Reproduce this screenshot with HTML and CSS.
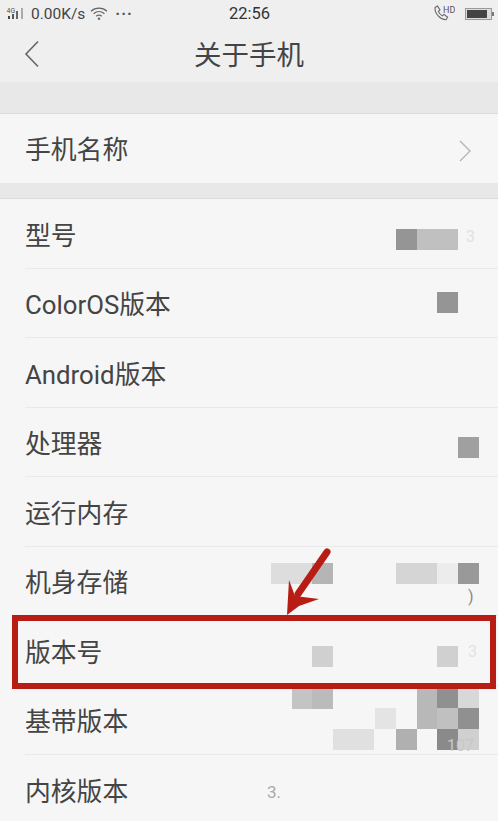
FILE: index.html
```html
<!DOCTYPE html>
<html lang="zh">
<head>
<meta charset="utf-8">
<title>关于手机</title>
<link rel="stylesheet" href="styles.css">
</head>
<body>
<div class="page">
  <header class="top">
    <div class="status">
      <div class="status-left">
        <svg class="sig" width="22" height="15" viewBox="0 0 22 15"><text x="0.500" y="7" class="sig-t">4G</text><rect x="2" y="10" width="2" height="3" fill="#444"/><rect x="6" y="8" width="2" height="5" fill="#555"/><rect x="10" y="5" width="2" height="8" fill="#666"/><rect x="15" y="2" width="2" height="11" fill="#aaa"/></svg>
        <span class="speed">0.00K/s</span>
        <svg class="wifi" width="18" height="15" viewBox="0 0 18 15" fill="none" stroke="#666" stroke-width="1.2"><path d="M1 5.200C5.500 1 12.500 1 17 5.200"/><path d="M3.600 7.800C6.800 5 11.200 5 14.400 7.800"/><path d="M6.200 10.200C8 8.800 10 8.800 11.800 10.200"/><circle cx="9" cy="12.800" r="1.200" fill="#666" stroke="none"/></svg>
        <span class="dots">···</span>
      </div>
      <span class="time">22:56</span>
      <div class="status-right">
        <svg width="22" height="18" viewBox="0 0 22 18" fill="none" stroke="#666" stroke-width="1.100"><path d="M2 2.500 4.500 1l2.500 4-1.600 1.400c.8 2 2 3.400 4 4.400L11 9.400l3.600 2.800-1.600 2.600C8 15 1.500 9 2 2.500z"/><text x="10" y="8" class="hd">HD</text></svg>
        <span class="battery"><span class="level"></span></span>
      </div>
    </div>
    <nav class="nav">
      <svg class="back" width="16" height="28" viewBox="0 0 16 28" fill="none" stroke="#666" stroke-width="1.600"><path d="M14 1.500 2 14 14 26.500"/></svg>
      <h1 class="title">关于手机</h1>
    </nav>
  </header>
  <div class="band band-a"></div>
  <section class="group">
    <div class="row row-name"><span>手机名称</span><svg class="chev" width="14" height="22" viewBox="0 0 14 22" fill="none" stroke="#b4b4b4" stroke-width="1.400"><path d="M2 1 12 11 2 21"/></svg></div>
  </section>
  <div class="band band-b"></div>
  <section class="group">
    <div class="row">型号</div>
    <div class="row">ColorOS版本</div>
    <div class="row">Android版本</div>
    <div class="row">处理器</div>
    <div class="row">运行内存</div>
    <div class="row">机身存储</div>
    <div class="row">版本号</div>
    <div class="row">基带版本</div>
    <div class="row last">内核版本</div>
  </section>

  <div class="mosaic" aria-hidden="true">
    <i class="b c95 w1" id="a1"></i><i class="b cc0 w2" id="a2"></i>
    <i class="b c95 w1" id="a3"></i>
    <i class="b ca0 w1" id="a4"></i>
    <i class="b cdd w2" id="a5"></i><i class="b cb5 w1" id="a6"></i><i class="b cd5 w2" id="a7"></i><i class="b cec w1" id="a8"></i><i class="b c99 w1" id="a9"></i>
    <i class="b cd0 w1" id="a10"></i><i class="b cd0 w1" id="a11"></i>
    <i class="b cc4 w1" id="a12"></i><i class="b cbb w1" id="a13"></i><i class="b cb8 w1" id="a14"></i><i class="b c90 w1" id="a15"></i><i class="b cd8 w1" id="a16"></i>
    <i class="b ce4 w1" id="a17"></i><i class="b cb8 w1" id="a18"></i><i class="b cc0 w1" id="a19"></i><i class="b c90 w1" id="a20"></i>
    <i class="b ce0 w2" id="a21"></i><i class="b cb0 w1" id="a22"></i><i class="b c8a w1" id="a23"></i><i class="b cd0 w1" id="a24"></i>
    <span class="faint f1">3</span>
    <span class="faint f2">)</span>
    <span class="faint f3">3</span>
    <span class="faint f4">3.</span>
    <span class="faint f5">107</span>
  </div>

  <div class="highlight"></div>
  <svg class="arrow" width="60" height="80" viewBox="0 0 60 80"><path d="M47 8 18 50" stroke="#b81d15" stroke-width="7" stroke-linecap="round" fill="none"/><path d="M7 71 9 36 15 52 39 55 19 62z" fill="#b81d15"/></svg>
</div>
</body>
</html>
```
FILE: styles.css
```css
* { box-sizing: border-box; }
html, body { margin: 0; padding: 0; }
body {
  background: #f6f6f6;
  font-family: Roboto, "Noto Sans CJK SC", sans-serif;
  color: #444;
}
.page { position: relative; width: 498px; height: 821px; overflow: hidden; }
.top { background: #efefef; height: 82px; }
.status { height: 27px; display: flex; align-items: center; justify-content: space-between; position: relative; padding: 0 6px 0 6px; }
.status-left { display: flex; align-items: center; gap: 3px; }
.sig-t { font-size: 7px; fill: #555; font-family: Roboto, sans-serif; }
.speed { font-size: 15.500px; color: #444; }
.wifi { margin-left: 2px; }
.dots { font-size: 16px; color: #555; margin-left: 4px; letter-spacing: 1px; font-weight: 700; line-height: 1; }
.time { position: absolute; left: 229px; font-size: 16.500px; color: #333; }
.status-right { display: flex; align-items: center; gap: 10px; }
.hd { font-size: 9px; fill: #555; stroke: none; font-family: Roboto, sans-serif; }
.battery { width: 27px; height: 12px; border: 1px solid #999; display: block; padding: 1px; background: #ddd; position: relative; }
.battery::after { content: ""; position: absolute; right: -3px; top: 3px; width: 2px; height: 4px; background: #777; }
.level { display: block; width: 20px; height: 8px; background: #444; }
.nav { height: 55px; display: flex; align-items: center; justify-content: center; position: relative; padding-top: 2px; }
.back { position: absolute; left: 24px; top: 13px; }
.title { margin: 0; font-size: 27.500px; font-weight: 400; color: #444; line-height: 1; }
.band { background: #e8e8e8; border-bottom: 1px solid #dcdcdc; }
.band-a { height: 32px; }
.band-b { height: 16px; }
.group { padding-left: 25px; }
.row {
  height: 69.500px;
  display: flex;
  align-items: center;
  font-size: 25.800px;
  line-height: 1;
  color: #444;
  padding-top: 7px;
  border-bottom: 1px solid #e9e9e9;
}
.row.last { border-bottom: 0; }
.row-name { height: 69px; padding-top: 4px; padding-right: 26px; justify-content: space-between; border-bottom: 0; }
.mosaic { position: absolute; inset: 0; }
.b { position: absolute; display: block; height: 21px; }
.w1 { width: 21px; }
.w2 { width: 41px; }
.c8a { background: #8a8a8a; }
.c90 { background: #909090; }
.c95 { background: #959595; }
.c99 { background: #999; }
.ca0 { background: #a0a0a0; }
.cb0 { background: #b0b0b0; }
.cb5 { background: #b5b5b5; }
.cb8 { background: #b8b8b8; }
.cbb { background: #bbb; }
.cc0 { background: #c0c0c0; }
.cc4 { background: #c4c4c4; }
.cd0 { background: #d0d0d0; }
.cd5 { background: #d5d5d5; }
.cd8 { background: #d8d8d8; }
.cdd { background: #ddd; }
.ce0 { background: #e0e0e0; }
.ce4 { background: #e4e4e4; }
.cec { background: #ececec; }
#a1 { left: 396px; top: 229px; } #a2 { left: 417px; top: 229px; }
#a3 { left: 437px; top: 292px; }
#a4 { left: 458px; top: 437px; }
#a5 { left: 271px; top: 563px; } #a6 { left: 312px; top: 563px; } #a7 { left: 396px; top: 563px; } #a8 { left: 437px; top: 563px; } #a9 { left: 458px; top: 563px; }
#a10 { left: 312px; top: 646px; } #a11 { left: 437px; top: 646px; }
#a12 { left: 292px; top: 688px; } #a13 { left: 312px; top: 688px; } #a14 { left: 417px; top: 688px; } #a15 { left: 437px; top: 688px; } #a16 { left: 458px; top: 688px; }
#a17 { left: 375px; top: 708px; } #a18 { left: 417px; top: 708px; } #a19 { left: 437px; top: 708px; } #a20 { left: 458px; top: 708px; }
#a21 { left: 333px; top: 729px; } #a22 { left: 396px; top: 729px; } #a23 { left: 437px; top: 729px; } #a24 { left: 458px; top: 729px; }
.faint { position: absolute; font-size: 16px; line-height: 1; color: #e2e2e2; }
.f1 { left: 466px; top: 229px; }
.f2 { left: 468px; top: 589px; color: #888; }
.f3 { left: 468px; top: 644px; }
.f4 { left: 267px; top: 784px; color: #aaa; font-size: 17px; }
.f5 { left: 447px; top: 738px; color: #c8c8c8; }
.highlight { position: absolute; left: 12px; top: 615px; width: 484px; height: 74px; border: 6px solid #b81d15; }
.arrow { position: absolute; left: 280px; top: 544px; }
```
